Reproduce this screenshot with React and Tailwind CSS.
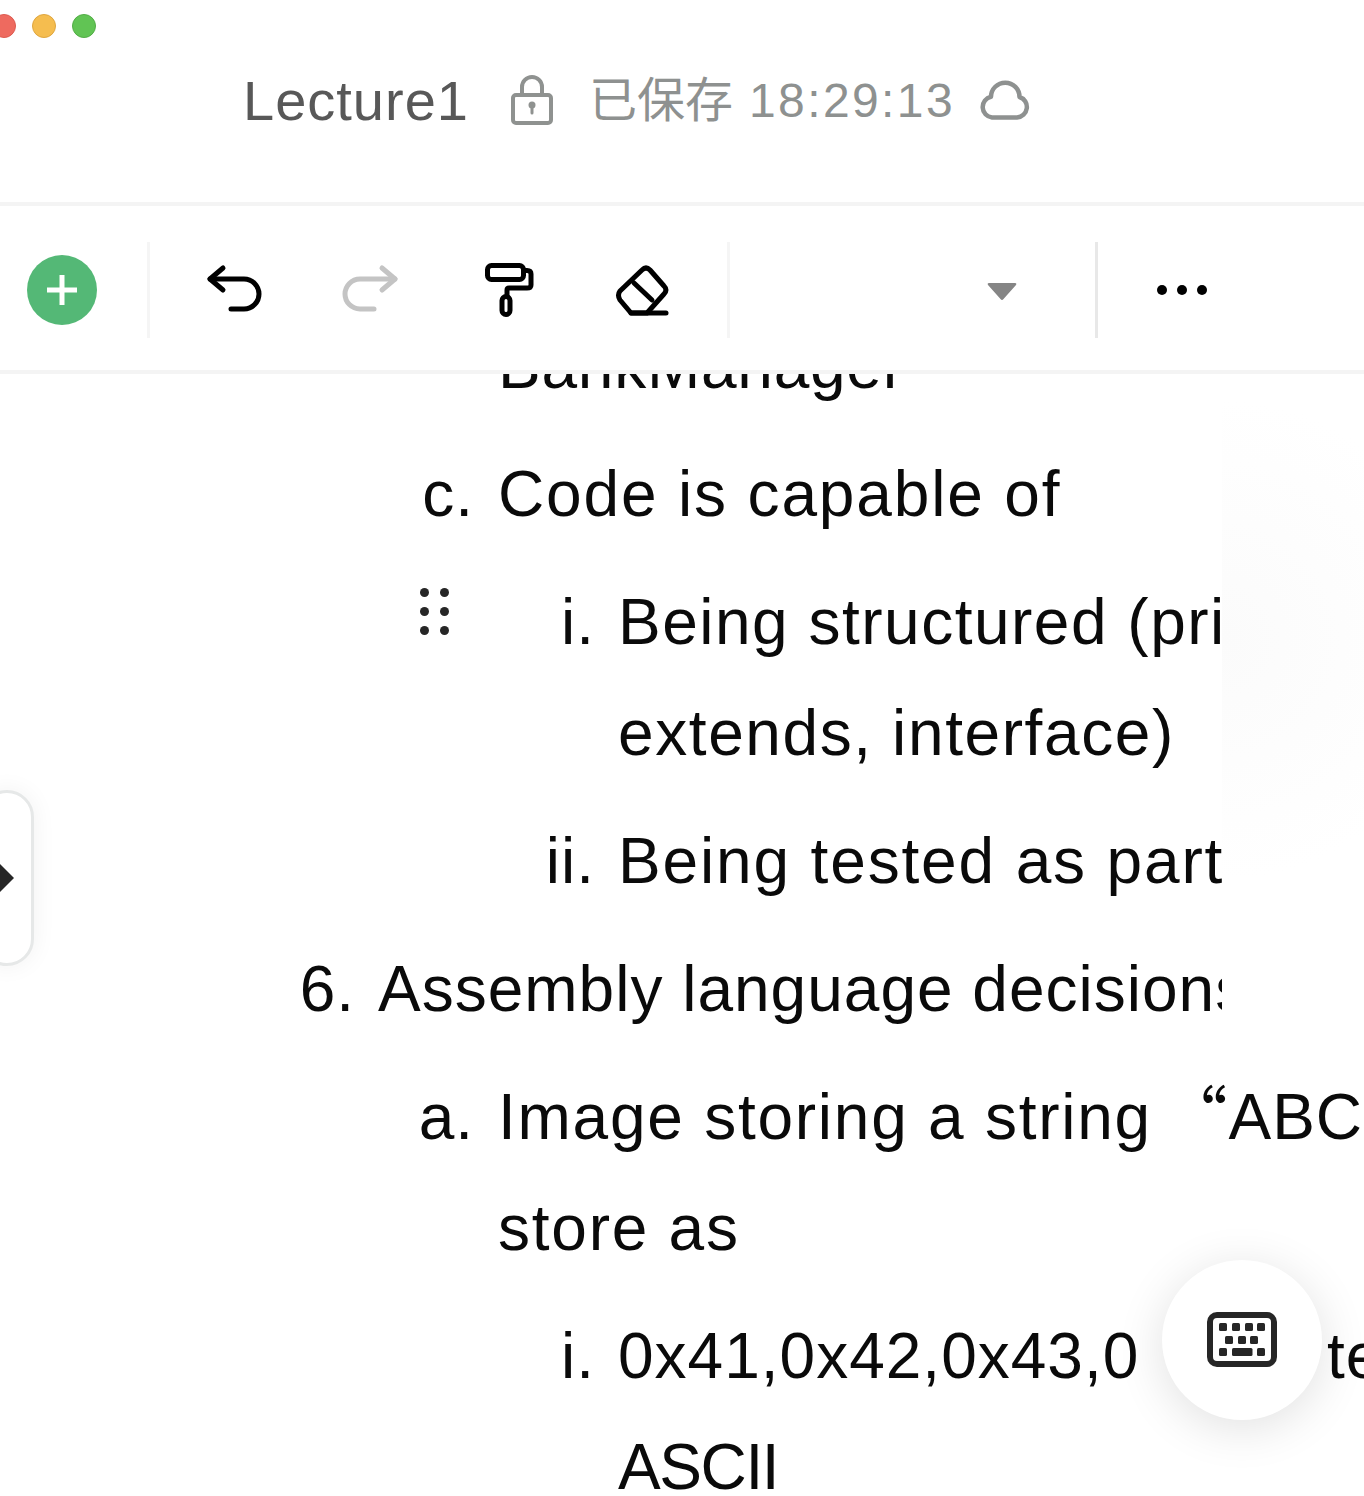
const SANS = "font-['Liberation_Sans','Noto_Sans_CJK_SC',sans-serif]";

function Divider({ className }) {
  return <div className={"h-[96px] w-[3px] shrink-0 " + className} />;
}

function Undo() {
  return (
    <svg width="64" height="56" viewBox="0 0 64 56" fill="none" stroke="#000" strokeWidth="5" strokeLinecap="round" strokeLinejoin="round">
      <path d="M18 6 L5 17 L18 28" />
      <path d="M5 17 H39 A15 15 0 0 1 39 47 H26" />
    </svg>
  );
}

function Redo() {
  return (
    <svg width="64" height="56" viewBox="0 0 64 56" fill="none" stroke="#c4c4c4" strokeWidth="5" strokeLinecap="round" strokeLinejoin="round">
      <path d="M44 6 L57 17 L44 28" />
      <path d="M57 17 H22 A15 15 0 0 0 22 47 H36" />
    </svg>
  );
}

function Roller() {
  return (
    <svg width="56" height="60" viewBox="0 0 56 60" fill="none" stroke="#000" strokeWidth="5" strokeLinecap="round" strokeLinejoin="round">
      <rect x="5.5" y="4.5" width="36" height="14" rx="4" />
      <path d="M42 9.5 H45 Q49 9.5 49 13 V24 Q49 27 45 27 H27 Q25 27 25 29 V35" />
      <rect x="20" y="35.5" width="8" height="18" rx="4" />
    </svg>
  );
}

function Eraser() {
  return (
    <svg width="60" height="56" viewBox="0 0 60 56" fill="none" stroke="#000" strokeWidth="5" strokeLinecap="round" strokeLinejoin="round">
      <path d="M28 8 Q32 4 36 8 L50 24 Q54 28 50 32 L33 51 H17 L6 38 Q3 33 6 29 Z" />
      <path d="M20 21 L38 38" />
      <path d="M17 51 H52" />
    </svg>
  );
}

function Lock() {
  return (
    <svg width="48" height="56" viewBox="0 0 48 56" fill="none" stroke="#8f9290" strokeWidth="4">
      <rect x="5" y="22" width="38" height="28" rx="3" />
      <path d="M14 22 V14 A10 10 0 0 1 34 14 V22" />
      <circle cx="24" cy="32" r="3.5" fill="#8f9290" stroke="none" />
      <path d="M24 32 V40" strokeWidth="3" strokeLinecap="round" />
    </svg>
  );
}

function Cloud() {
  return (
    <svg width="56" height="44" viewBox="0 0 56 44" fill="none" stroke="#8e9190" strokeWidth="4.5" strokeLinejoin="round">
      <path d="M15 37.5 H40 A10.5 10.5 0 0 0 42.5 17 A14 14 0 0 0 14 16.8 A10.5 10.5 0 0 0 15 37.5 Z" />
    </svg>
  );
}

function Keyboard() {
  const top = [1223, 1236, 1249, 1261];
  const mid = [1229, 1242, 1254];
  return (
    <svg width="76" height="62" viewBox="1204 1309 76 62" fill="#262626">
      <rect x="1210" y="1315" width="64" height="49" rx="7" fill="none" stroke="#262626" strokeWidth="6" />
      {top.map((x) => <rect key={x} x={x - 4} y="1323" width="8" height="8" rx="1.5" />)}
      {mid.map((x) => <rect key={x} x={x - 4} y="1336" width="8" height="8" rx="1.5" />)}
      <rect x="1219" y="1348" width="8" height="8" rx="1.5" />
      <rect x="1232" y="1348" width="20.5" height="8" rx="1.5" />
      <rect x="1257" y="1348" width="8" height="8" rx="1.5" />
    </svg>
  );
}

function Line({ marker, indent, pad = "pr-[24px]", clip, track = "tracking-[1.85px]", children }) {
  return (
    <div className={"flex h-[111px] whitespace-nowrap overflow-hidden " + (clip ? "w-[1222px]" : "w-[1364px]")}>
      <div className={"shrink-0 text-right " + indent + " " + pad}>{marker}</div>
      <div className={"shrink-0 " + track}>{children}</div>
    </div>
  );
}

export default function App() {
  return (
    <div className={"relative h-[1496px] w-[1364px] overflow-hidden bg-white " + SANS}>
      <header className="h-[202px]">
        <div className="flex gap-4 pt-[14px] -ml-2">
          <div className="size-6 rounded-full bg-[#ee6a5f] border border-[#dd5a50]" />
          <div className="size-6 rounded-full bg-[#f5bd4f] border border-[#dfa63f]" />
          <div className="size-6 rounded-full bg-[#61c454] border border-[#52ad46]" />
        </div>
        <div className="flex items-center pl-[243px] mt-[33px] h-[60px]">
          <span className="text-[56px] leading-[60px] text-[#585858] tracking-[1px]">Lecture1</span>
          <span className="ml-[39px]"><Lock /></span>
          <span className="ml-[33px] text-[48px] leading-[60px] text-[#8e9190]">已保存</span>
          <span className="ml-[16px] text-[48px] leading-[60px] text-[#8e9190] tracking-[2.4px]">18:29:13</span>
          <span className="ml-[22px] mt-[2px]"><Cloud /></span>
        </div>
      </header>

      <div className="relative z-10 flex h-[172px] items-center border-y-4 border-[#f4f4f4] bg-white pt-[4px]">
        <div className="ml-[27px] flex size-[70px] items-center justify-center rounded-full bg-[#54b876]">
          <svg width="30" height="30" viewBox="0 0 30 30" stroke="#fff" strokeWidth="5">
            <path d="M15 0 V30 M0 15 H30" />
          </svg>
        </div>
        <Divider className="ml-[50px] bg-[#f5f5f5]" />
        <span className="ml-[54px] pl-[1px]"><Undo /></span>
        <span className="ml-[69px]"><Redo /></span>
        <span className="ml-[80px] pt-[1px]"><Roller /></span>
        <span className="ml-[76px] -mt-[1px]"><Eraser /></span>
        <Divider className="ml-[53px] bg-[#f5f5f5]" />
        <svg className="ml-[257px] mt-[3px]" width="30" height="18" viewBox="0 0 30 18" fill="#858585">
          <path d="M2 0 H28 Q30 0 29 2 L16.5 16 Q15 18 13.5 16 L1 2 Q0 0 2 0 Z" />
        </svg>
        <Divider className="ml-[78px] bg-[#e8e8e8]" />
        <div className="ml-[59px] flex gap-[10px]">
          <div className="size-[10px] rounded-full bg-black" />
          <div className="size-[10px] rounded-full bg-black" />
          <div className="size-[10px] rounded-full bg-black" />
        </div>
      </div>

      <main className="h-[1122px] overflow-hidden text-[64px] leading-[111px] text-[#0a0a0a] tracking-[1px]">
        <div className="-mt-[63px] flex flex-col gap-[17px]">
          <Line marker="" indent="w-[498px]" track="tracking-[0.75px]">BankManager</Line>
          <Line marker="c." indent="w-[498px]">Code is capable of</Line>
          <div>
            <Line marker="i." indent="w-[618px]" pad="pr-[23px]" clip track="tracking-[1.5px]">Being structured (private,</Line>
            <Line marker="" indent="w-[618px]" clip track="tracking-[1.6px]">extends, interface)</Line>
          </div>
          <Line marker="ii." indent="w-[618px]" pad="pr-[23px]" clip>Being tested as part of</Line>
          <Line marker="6." indent="w-[378px]" pad="pr-[23px]" clip track="tracking-[1px]">Assembly language decisions</Line>
          <div>
            <Line marker="a." indent="w-[498px]" track="tracking-[1.75px]">
              Image storing a string{" "}
              <span className="-ml-[8px] font-['Noto_Sans_CJK_SC'] leading-[0] tracking-[1px]">“</span>
              <span className="tracking-[1px]">ABC</span>
            </Line>
            <Line marker="" indent="w-[498px]" track="tracking-[1.75px]">store as</Line>
          </div>
          <div>
            <Line marker="i." indent="w-[618px]" pad="pr-[23px]" track="tracking-[1px]">
              0x41,0x42,0x43,0 <span className="ml-[169px]">te</span>
            </Line>
            <Line marker="" indent="w-[618px]" track="-tracking-[1.4px]">ASCII</Line>
          </div>
        </div>
      </main>

      <div className="absolute left-[1222px] top-[400px] h-[480px] w-[142px] bg-[radial-gradient(ellipse_240px_240px_at_0%_50%,#fbfbfb,#ffffff)]" />

      <div className="absolute left-[420px] top-[588px] grid grid-cols-2 gap-x-[11px] gap-y-[10px]">
        {[0, 1, 2, 3, 4, 5].map((i) => (
          <div key={i} className="size-[9px] rounded-full bg-[#262626]" />
        ))}
      </div>

      <div className="absolute -left-[20px] top-[790px] flex h-[176px] w-[54px] items-center justify-end rounded-[28px] border-[3px] border-[#e6e8e8] bg-white pr-[17px] shadow-[0_0_24px_rgba(0,0,0,0.06)]">
        <svg width="14" height="28" viewBox="0 0 14 28" fill="#262626">
          <path d="M0 0 L14 14 L0 28 Z" />
        </svg>
      </div>

      <div className="absolute left-[1162px] top-[1260px] flex size-[160px] items-center justify-center rounded-full bg-white shadow-[0_8px_48px_rgba(0,0,0,0.12)]">
        <span className="-mt-[1px]"><Keyboard /></span>
      </div>
    </div>
  );
}
